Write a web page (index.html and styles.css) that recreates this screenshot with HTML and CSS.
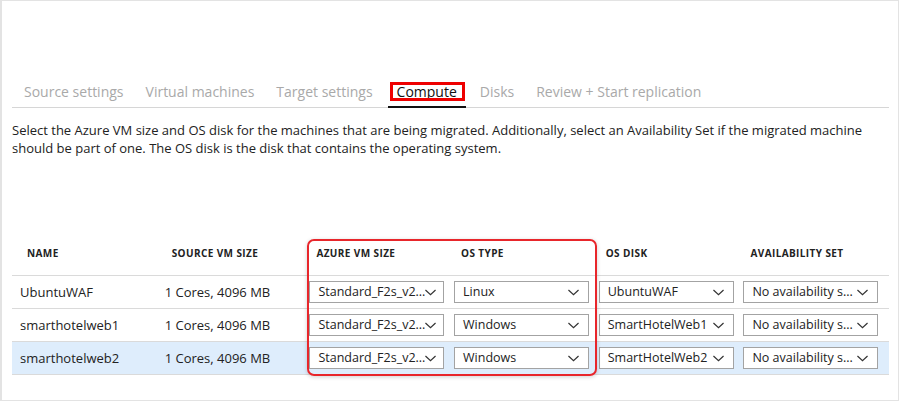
FILE: index.html
```html
<!DOCTYPE html>
<html>
<head>
<meta charset="utf-8">
<link rel="stylesheet" href="styles.css">
</head>
<body>
<div class="page">
  <div class="tabs">
    <span class="tab">Source settings</span>
    <span class="tab">Virtual machines</span>
    <span class="tab">Target settings</span>
    <span class="tab active">Compute</span>
    <span class="tab">Disks</span>
    <span class="tab">Review + Start replication</span>
  </div>
  <p class="desc">Select the Azure VM size and OS disk for the machines that are being migrated. Additionally, select an Availability Set if the migrated machine should be part of one. The OS disk is the disk that contains the operating system.</p>
  <div class="table">
    <div class="row head">
      <div class="th">NAME</div>
      <div class="th">SOURCE VM SIZE</div>
      <div class="th">AZURE VM SIZE</div>
      <div class="th">OS TYPE</div>
      <div class="th">OS DISK</div>
      <div class="th">AVAILABILITY SET</div>
    </div>
    <div class="row">
      <div class="td">UbuntuWAF</div>
      <div class="td">1 Cores, 4096 MB</div>
      <div class="td"><div class="sel"><span>Standard_F2s_v2...</span><svg class="chev" viewBox="0 0 12 7"><path d="M0.5 0.8 L6 6 L11.5 0.8"/></svg></div></div>
      <div class="td"><div class="sel"><span>Linux</span><svg class="chev" viewBox="0 0 12 7"><path d="M0.5 0.8 L6 6 L11.5 0.8"/></svg></div></div>
      <div class="td"><div class="sel"><span>UbuntuWAF</span><svg class="chev" viewBox="0 0 12 7"><path d="M0.5 0.8 L6 6 L11.5 0.8"/></svg></div></div>
      <div class="td"><div class="sel"><span>No availability s...</span><svg class="chev" viewBox="0 0 12 7"><path d="M0.5 0.8 L6 6 L11.5 0.8"/></svg></div></div>
    </div>
    <div class="row">
      <div class="td">smarthotelweb1</div>
      <div class="td">1 Cores, 4096 MB</div>
      <div class="td"><div class="sel"><span>Standard_F2s_v2...</span><svg class="chev" viewBox="0 0 12 7"><path d="M0.5 0.8 L6 6 L11.5 0.8"/></svg></div></div>
      <div class="td"><div class="sel"><span>Windows</span><svg class="chev" viewBox="0 0 12 7"><path d="M0.5 0.8 L6 6 L11.5 0.8"/></svg></div></div>
      <div class="td"><div class="sel"><span>SmartHotelWeb1</span><svg class="chev" viewBox="0 0 12 7"><path d="M0.5 0.8 L6 6 L11.5 0.8"/></svg></div></div>
      <div class="td"><div class="sel"><span>No availability s...</span><svg class="chev" viewBox="0 0 12 7"><path d="M0.5 0.8 L6 6 L11.5 0.8"/></svg></div></div>
    </div>
    <div class="row selected">
      <div class="td">smarthotelweb2</div>
      <div class="td">1 Cores, 4096 MB</div>
      <div class="td"><div class="sel"><span>Standard_F2s_v2...</span><svg class="chev" viewBox="0 0 12 7"><path d="M0.5 0.8 L6 6 L11.5 0.8"/></svg></div></div>
      <div class="td"><div class="sel"><span>Windows</span><svg class="chev" viewBox="0 0 12 7"><path d="M0.5 0.8 L6 6 L11.5 0.8"/></svg></div></div>
      <div class="td"><div class="sel"><span>SmartHotelWeb2</span><svg class="chev" viewBox="0 0 12 7"><path d="M0.5 0.8 L6 6 L11.5 0.8"/></svg></div></div>
      <div class="td"><div class="sel"><span>No availability s...</span><svg class="chev" viewBox="0 0 12 7"><path d="M0.5 0.8 L6 6 L11.5 0.8"/></svg></div></div>
    </div>
    <div class="highlight"></div>
  </div>
</div>
</body>
</html>
```
FILE: styles.css
```css
html, body {
  margin: 0;
  padding: 0;
  background: #fff;
}
body {
  font-family: "Segoe UI", "Open Sans", "Noto Sans", sans-serif;
  color: #222;
}
.page {
  width: 899px;
  height: 401px;
  box-sizing: border-box;
  border: 1px solid #e3e3e3;
  border-left-width: 2px;
  padding: 0 9px 0 10px;
}
.tabs {
  margin-top: 81px;
  height: 25px;
  border-bottom: 1px solid #d6d6d6;
  display: flex;
  gap: 22px;
  padding-left: 12px;
}
.tab {
  position: relative;
  font-size: 14px;
  line-height: 19px;
  height: 19px;
  color: #a9a9a9;
  white-space: nowrap;
}
.tab.active {
  color: #111;
  margin: 0 1px 0 2px;
}
.tab.active::before {
  content: "";
  position: absolute;
  left: -7px;
  right: -8px;
  top: 0;
  height: 19px;
  border: 3px solid #ee0000;
  box-sizing: border-box;
}
.tab.active::after {
  content: "";
  position: absolute;
  left: -9px;
  right: -9px;
  top: 24px;
  height: 2px;
  background: #111;
}
.desc {
  margin: 13px 0 0 0;
  font-size: 13px;
  line-height: 18px;
  color: #222;
}
.table {
  position: relative;
  margin-top: 78px;
}
.row {
  display: grid;
  grid-template-columns: repeat(6, 144.7px);
  height: 32px;
  border-bottom: 1px solid #dadada;
  align-items: center;
}
.row.head {
  height: 40px;
  align-items: start;
}
.row.selected {
  background: #deedfc;
}
.th {
  padding: 12px 0 0 15px;
  font-size: 10px;
  letter-spacing: 0.4px;
  line-height: 13px;
  font-weight: 700;
  color: #222;
  white-space: nowrap;
}
.td {
  padding-left: 8px;
  font-size: 13px;
  line-height: 18px;
  color: #222;
  white-space: nowrap;
}
.sel {
  width: 135px;
  height: 22px;
  box-sizing: border-box;
  border: 1px solid #a3a3a3;
  background: #fff;
  display: flex;
  align-items: center;
  justify-content: space-between;
  padding: 0 9px 0 8px;
  font-size: 12.5px;
  line-height: 18px;
}
.chev {
  width: 11px;
  height: 7px;
  flex: none;
  fill: none;
  stroke: #333;
  stroke-width: 1.3;
}
.highlight {
  position: absolute;
  left: 295px;
  top: 4px;
  width: 290px;
  height: 137px;
  box-sizing: border-box;
  border: 2px solid #e8262b;
  border-radius: 7px;
  box-shadow: 0 1px 4px rgba(0, 0, 0, 0.18);
  pointer-events: none;
}
```
